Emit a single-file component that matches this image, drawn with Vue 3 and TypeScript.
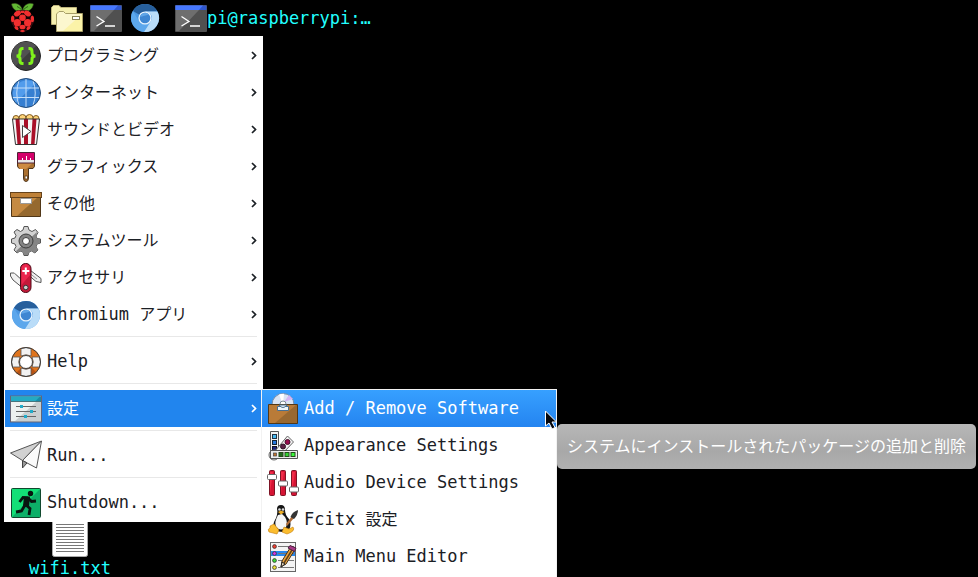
<script setup lang="ts">
import { ref } from 'vue'

interface MenuEntry {
  label: string
  icon: string
  submenu?: boolean
}

const groups: MenuEntry[][] = [
  [
    { label: 'プログラミング', icon: 'code', submenu: true },
    { label: 'インターネット', icon: 'globe', submenu: true },
    { label: 'サウンドとビデオ', icon: 'popcorn', submenu: true },
    { label: 'グラフィックス', icon: 'brush', submenu: true },
    { label: 'その他', icon: 'box', submenu: true },
    { label: 'システムツール', icon: 'gear', submenu: true },
    { label: 'アクセサリ', icon: 'knife', submenu: true },
    { label: 'Chromium アプリ', icon: 'chromium', submenu: true },
  ],
  [{ label: 'Help', icon: 'lifebuoy', submenu: true }],
  [{ label: '設定', icon: 'settings', submenu: true }],
  [{ label: 'Run...', icon: 'plane' }],
  [{ label: 'Shutdown...', icon: 'exit' }],
]

const settingsEntries: MenuEntry[] = [
  { label: 'Add / Remove Software', icon: 'package' },
  { label: 'Appearance Settings', icon: 'swatches' },
  { label: 'Audio Device Settings', icon: 'mixer' },
  { label: 'Fcitx 設定', icon: 'tux' },
  { label: 'Main Menu Editor', icon: 'editor' },
]

const launchers = [
  { name: 'ファイルマネージャ', icon: 'folder' },
  { name: 'ターミナル', icon: 'terminal' },
  { name: 'Chromium', icon: 'chromium' },
]

const activeGroup = ref('設定')
const activeEntry = ref('Add / Remove Software')

// Splits a label into runs of Latin and Japanese text, which are set at different sizes.
function runs(label: string) {
  return (label.match(/[\x20-\x7e]+|[^\x20-\x7e]+/g) ?? []).map((text) => ({
    text,
    latin: text.charCodeAt(0) < 0x7f,
  }))
}

const terminal = `
  <rect x="0" y="3" width="32" height="27" rx="1" fill="#505050"/>
  <path d="M1 8H24L4 29H1z" fill="#6e6e6e"/>
  <path d="M.5 3.500H31.500V8H.5z" fill="#2f57cf"/><path d="M.5 3.500H28L24 8H.5z" fill="#4778ff"/>
  <path d="M6.500 14.500L14 19.500L6.500 24M15 24H25" fill="none" stroke="#fff" stroke-width="1.300"/>`

const chromium = `
  <circle cx="16" cy="16" r="14" fill="#4b97e2"/>
  <path d="M16 16L3.900 9A14 14 0 0 1 28.400 9.500H16z" fill="#275f9c"/>
  <path d="M3.900 9A14 14 0 0 0 15 30L21 20L16 22A6.500 6.500 0 0 1 10 19z" fill="#5ca7ec"/>
  <path d="M16 9.500H28.400A14 14 0 0 1 15 30L21.600 19.500A6.500 6.500 0 0 0 21 11.500z" fill="#b9dcf8"/>
  <circle cx="16" cy="16" r="6.600" fill="#e7f3fd"/>
  <circle cx="16" cy="16" r="5.300" fill="#3e86d2"/>
  <path d="M11 15A5.200 5.200 0 0 1 20 12.500z" fill="#60a5e7"/>`

const icons: Record<string, string> = {
  terminal,
  chromium,
  raspberry: `
    <path d="M16.500 9C15.500 1 8 .5 5.500 2C6.500 8 11.500 10.500 16.500 9C21.500 10.500 26.500 8 27.500 2C25 .5 17.500 1 16.500 9z" fill="#62b834" stroke="#2c3516" stroke-width=".6"/>
    <path d="M11 4.500Q14 5.500 16 8.500M22 4.500Q19 5.500 17 8.500" stroke="#2d6317" fill="none"/>
    <path d="M11.500 8.500H21.500L26.500 13.500L28 19L24 26.500L16.500 30.500L9 26.500L5 19L6.500 13.500z" fill="#160406" stroke="#4d151a" stroke-width=".7"/>
    <g fill="#f22f2f"><ellipse cx="11.500" cy="11.500" rx="3.700" ry="2.500" transform="rotate(-30 11.500 11.500)"/><ellipse cx="21.500" cy="11.500" rx="3.700" ry="2.500" transform="rotate(30 21.500 11.500)"/>
    <ellipse cx="16.500" cy="10" rx="2" ry="1.300"/><circle cx="16.500" cy="15.800" r="3.300"/><circle cx="11.300" cy="20.800" r="3.700"/><circle cx="21.700" cy="20.800" r="3.700"/>
    <ellipse cx="6.700" cy="17" rx="1.700" ry="3.200"/><ellipse cx="26.300" cy="17" rx="1.700" ry="3.200"/><ellipse cx="16.500" cy="25" rx="3" ry="2.300"/>
    <ellipse cx="10.500" cy="26" rx="2.300" ry="1.500" transform="rotate(40 10.500 26)"/><ellipse cx="22.500" cy="26" rx="2.300" ry="1.500" transform="rotate(-40 22.500 26)"/><ellipse cx="16.500" cy="29" rx="2.300" ry="1"/></g>`,
  folder: `
    <path d="M.5 22.500V5.500L2.500 3.500H8L10 5.500H25.500V22.500z" fill="#f6f0b0" stroke="#bfb57c"/>
    <path d="M5.500 29.500V12L8 9.500H12.500L14.500 11.500H31.500V29.500z" fill="#fcf7cf" stroke="#a89f68"/>
    <path d="M31 12V29H12z" fill="#fbf3a8"/>
    <rect x="21.500" y="14.500" width="7" height="3" fill="#fff" stroke="#8b8558"/>`,
  code: `
    <circle cx="16" cy="16" r="14.500" fill="#3c3c3c" stroke="#222"/>
    <path d="M5.500 26A14 14 0 0 1 26 6z" fill="#515151"/>
    <path d="M13.500 8.500H12.500Q10 8.500 10 11.500V13Q10 16 6.500 16Q10 16 10 19V20.500Q10 23.500 12.500 23.500H13.500M18.500 8.500H19.500Q22 8.500 22 11.500V13Q22 16 25.500 16Q22 16 22 19V20.500Q22 23.500 19.500 23.500H18.500" fill="none" stroke="#80f21c" stroke-width="3"/>`,
  globe: `
    <circle cx="16" cy="16" r="14.500" fill="#367fd1"/><path d="M5.500 26A14.500 14.500 0 0 1 26 6z" fill="#529cec"/>
    <path d="M16 1.500V30.500M2 11H30M2 20.500H30M9 3.500Q4.500 16 9 28.500M23 3.500Q27.500 16 23 28.500" fill="none" stroke="#c5def8"/>
    <circle cx="16" cy="16" r="14.500" fill="none" stroke="#244c78"/>`,
  popcorn: `
    <g fill="#ffd477" stroke="#825d24"><circle cx="6" cy="4.500" r="3"/><circle cx="26" cy="4.500" r="3"/><circle cx="12.500" cy="4" r="3.500"/><circle cx="19.500" cy="4" r="3.500"/></g>
    <path d="M2.500 5H29.500L26.500 30.500H5.500z" fill="#f4f4f4"/>
    <path d="M5.500 5H9.500L11 30.500H7.500zM14 5H18V30.500H14zM22.500 5H26.500L24.500 30.500H21z" fill="#a90f28"/>
    <path d="M2.500 5H29.500L26.500 30.500H5.500z" fill="none" stroke="#333"/>
    <path d="M12.500 11.500L21 17.500L12.500 23.500z" fill="#fff" stroke="#444"/>`,
  brush: `
    <path d="M7.500 11V15.500L9 17.500H13.500V27Q13.500 30.500 16 30.500Q18.500 30.500 18.500 27V17.500H23L24.500 15.500V11z" fill="#ab702f" stroke="#4d351d"/>
    <path d="M8 12H23L16 18H9.500z" fill="#cd8b42"/>
    <path d="M7.500 1.500H24.500V12H7.500z" fill="#e6e6e6" stroke="#4e2135"/>
    <path d="M8 2H24V9H8z" fill="#d4006a"/>
    <path d="M12.500 9V7M16.500 9V5M20.500 9V7" stroke="#fff"/><rect x="15" y="25" width="2.500" height="3" fill="#fff" stroke="#5a3916" stroke-width=".8"/>`,
  box: `
    <path d="M1.500 8H30.500V28.500H1.500z" fill="#95692f" stroke="#503718"/><path d="M2 9H28L7 28H2z" fill="#c58a42"/>
    <rect x=".5" y="4.500" width="31" height="5" fill="#bf8138" stroke="#65431c"/><path d="M10.500 10.500H21.500V15.500H10.500z" fill="#fff" stroke="#9a9a9a"/>`,
  gear: `
    <path d="M13 5L14 1.500H18L19 5L22 6.500L25.500 4.500L28 7.500L26 11L27 13.500L30.500 14V18L27 19L26 22L28 25L25 28L21.500 26L19 27L18 30.500H14L13 27L10 26L7 28L4 25L6 21.500L5 19L1.500 18V14L5 13L6 10.500L4 7L7 4.500L10.500 6.500z" fill="#d2d2d2" stroke="#555"/>
    <path d="M27 7L26 11L27 13.500L30 14V18L27 19L26 22L28 25L25 28L21.500 26L19 27L18 30H14L13 27L10 26L7 28L6 26z" fill="#858585"/>
    <circle cx="16" cy="16" r="7" fill="#858585" stroke="#3d3d3d"/><circle cx="16" cy="16" r="3.500" fill="#fff" stroke="#3f3f3f"/>`,
  knife: `
    <path d="M.5 11V14L3 18L14 27L18 23L4 11zM16 5L31 16.500V20.500L26 19.500L15 10z" fill="#f1f1f1" stroke="#555"/>
    <path d="M4 11L12 18M18 10L27 17" stroke="#999"/><rect x="10.500" y="1.500" width="10.500" height="29" rx="5" fill="#c51839" stroke="#4f0a18"/>
    <path d="M11.500 23V7Q11 3 16 2Q20 3 20 8V13z" fill="#eb254d"/><path d="M15.800 5.500V12.500M12.300 9H19.300" stroke="#fff" stroke-width="2"/>
    <circle cx="15.800" cy="25.500" r="2.300" fill="#ccc" stroke="#333"/>`,
  lifebuoy: `
    <circle cx="16" cy="16" r="10.700" fill="none" stroke="#df741d" stroke-width="8"/>
    <path d="M26 26L21 21L11 22L6 27Q16 34 26 26" fill="#b95414"/>
    <path d="M11 2.500Q16 .5 21 2.500V10Q16 7.500 11 10zM11 29.500Q16 31.500 21 29.500V22Q16 24.500 11 22zM2.500 11Q.5 16 2.500 21H10Q7.500 16 10 11zM29.500 11Q31.500 16 29.500 21H22Q24.500 16 22 11z" fill="#f2f2f2" stroke="#555" stroke-width=".8"/>
    <circle cx="16" cy="16" r="14.500" fill="none" stroke="#3e3e3e"/><circle cx="16" cy="16" r="6.500" fill="#fff" stroke="#3e3e3e"/>`,
  settings: `
    <rect x=".5" y="3" width="31" height="26" fill="#c9cfd0" stroke="#667"/><path d="M1 9H26L5 28H1z" fill="#edf1f0"/>
    <path d="M1 3.500H31V8.500H1z" fill="#168ba9"/><path d="M1 3.500H30L25 8.500H1z" fill="#24aac3"/><path d="M1 8.500H31" stroke="#45757d"/>
    <path d="M6 13.500H26M6 18.500H26M6 23.500H26" stroke="#666"/><g fill="#20abc9"><rect x="10" y="12" width="3" height="3"/><rect x="20" y="17" width="3" height="3"/><rect x="14" y="22" width="3" height="3"/></g>`,
  plane: `
    <path d="M.5 13L31.500 1L12.500 20.500z" fill="#d1d1d1" stroke="#555" stroke-linejoin="round"/>
    <path d="M31.500 1L12.500 20.500L26.500 28z" fill="#fafafa" stroke="#555" stroke-linejoin="round"/>
    <path d="M12.500 20.500V28L17 23z" fill="#999" stroke="#444" stroke-linejoin="round"/>`,
  exit: `
    <rect x="1.500" y="1.500" width="29" height="29" rx="1" fill="#0daf68" stroke="#11482e"/><path d="M2 2H30L2 30z" fill="#13df77"/>
    <circle cx="20.500" cy="6.500" r="2.700" fill="#081510"/>
    <path d="M18 11L13 10.500L9.500 15M18 11L15 18L11.500 24L6 25M16 18L20 21.500L19 28M18 11L21.500 14.500L26 14" fill="none" stroke="#081510" stroke-width="2.800"/><path d="M14 9.500L20 9.500L19 19L13 19z" fill="#081510"/>`,
  package: `
    <circle cx="16" cy="11.500" r="11" fill="#d9e4f4" stroke="#728ba9"/><path d="M16 11.500L12 1.500A11 11 0 0 1 17 .8z" fill="#fff"/><path d="M17 9L22 2L26 6z" fill="#d3b4f4"/>
    <circle cx="16" cy="11" r="3" fill="#fff" stroke="#7c8a98"/>
    <path d="M1.500 11.500H30.500V30.500H1.500z" fill="#986830" stroke="#523817"/><path d="M2 12H29L8 30H2z" fill="#b97b38"/>
    <path d="M10.500 13.500H21.500V17.500H10.500z" fill="#eef6fc" stroke="#496f90"/><path d="M12 12Q16 17 20 12z" fill="#e9f4ff" stroke="#496f90"/>`,
  swatches: `
    <path d="M3.500 1.500H11.500V24H3.500z" fill="#f3f3f3" stroke="#555"/><rect x="5.500" y="4.500" width="4" height="4" fill="#47b8ef" stroke="#234"/><rect x="5.500" y="10.500" width="4" height="4" fill="#2576db" stroke="#123"/><rect x="5.500" y="16.500" width="4" height="4" fill="#1b257e" stroke="#112"/>
    <path d="M8 21L20.500 6L26.500 12L15 24z" fill="#f2f2f2" stroke="#666"/><circle cx="20.500" cy="12" r="2.500" fill="#990a4d" stroke="#401129"/><circle cx="16" cy="16.500" r="2.500" fill="#5b2045" stroke="#321225"/>
    <circle cx="7" cy="25" r="5" fill="#eee" stroke="#666"/>
    <path d="M3.500 20.500H30.500V28.500H3.500z" fill="#eee" stroke="#555"/><g stroke="#254b1c"><rect x="12" y="22.500" width="4" height="4" fill="#226b1c"/><rect x="18" y="22.500" width="4" height="4" fill="#32d632"/><rect x="24" y="22.500" width="4" height="4" fill="#39f939"/></g><rect x="6.500" y="23" width="3" height="3" fill="#bf7530" stroke="#444" stroke-width=".7"/>`,
  mixer: `
    <g fill="#d51434" stroke="#7d1425"><rect x="2.500" y="3.500" width="5" height="25" rx="1"/><rect x="13.500" y="3.500" width="5" height="25" rx="1"/><rect x="24.500" y="3.500" width="5" height="25" rx="1"/></g>
    <path d="M3 26V5H6zM14 26V5H17zM25 26V5H28z" fill="#f02b48"/>
    <g fill="#fff" stroke="#666"><rect x=".5" y="7.500" width="9" height="5" rx="1"/><rect x="11.500" y="14" width="9" height="5" rx="1"/><rect x="22.500" y="20" width="9" height="5" rx="1"/></g>`,
  tux: `
    <path d="M9 14Q11 9 10 5Q10 1 14 1Q18 1 18 6Q18 11 22 15Q25 20 22 26Q16 30 8 26Q4 22 9 14z" fill="#151515"/>
    <path d="M11 11L15 10L18 13Q21 18 19 23Q14 28 9 23Q7 18 11 11z" fill="#f5f5f5"/>
    <circle cx="12.500" cy="5.500" r="1.300" fill="#ddd"/><circle cx="16" cy="5.500" r="1.300" fill="#ddd"/><path d="M11 8L14 6.500L17.500 8L14 10.500z" fill="#edae26"/>
    <path d="M3 22L7 20L12 26L10 30L2 28Q0 25 3 24zM17 23L22 25L26 23Q29 27 20 30L15 28z" fill="#fbbd30" stroke="#c27c0b" stroke-width=".6"/>
    <path d="M19 20L25 12L27 14L20 22z" fill="#b06b35"/><path d="M23.500 13Q25 8 31 6Q31 11 27 15z" fill="#343434"/>`,
  editor: `
    <rect x="3.500" y="1.500" width="25" height="29" fill="#f4f4f4" stroke="#666"/><rect x="4" y="10" width="24" height="5" fill="#2688ee"/>
    <path d="M11 5.500H27M11 12.500H27M11 19.500H27M11 26.500H27" stroke="#777"/><g stroke="#333" stroke-width=".8"><circle cx="7.500" cy="5.500" r="1.900" fill="#f13c2c"/><circle cx="7.500" cy="12.500" r="1.900" fill="#d538e5"/><circle cx="7.500" cy="19.500" r="1.900" fill="#38d932"/><circle cx="7.500" cy="26.500" r="1.900" fill="#ecdf34"/></g>
    <path d="M14 26L15 20L23 7L27 10L19 23z" fill="#eea53c" stroke="#433018"/><path d="M17 22L25 9" stroke="#5c401d" stroke-width="1.500"/><path d="M14 26L15 21L18 23z" fill="#e9d9bd" stroke="#222"/><path d="M21 7L23 4.500L29 7L27.500 10.500z" fill="#a73886" stroke="#4e203f"/>`,
}
</script>

<template>
  <div class="desktop">
    <header class="panel">
      <button class="launcher" aria-label="メニュー">
        <svg class="icon" viewBox="0 0 32 32" v-html="icons.raspberry"></svg>
      </button>
      <nav class="launchers">
        <button v-for="item in launchers" :key="item.icon" class="launcher" :aria-label="item.name">
          <svg class="icon" viewBox="0 0 32 32" v-html="icons[item.icon]"></svg>
        </button>
      </nav>
      <button class="task">
        <svg class="icon" viewBox="0 0 32 32" v-html="icons.terminal"></svg>
        <span class="latin">pi@raspberrypi:…</span>
      </button>
    </header>

    <main class="workspace">
      <button class="file">
        <svg class="icon-file" viewBox="0 0 36 48">
          <rect x=".5" y=".5" width="35" height="47" rx="2" fill="#fff" stroke="#aaa" />
          <path
            d="M4 6.500H32M4 9.500H32M4 12.500H32M4 15.500H32M4 18.500H32M4 21.500H32M4 24.500H32M4 27.500H32M4 30.500H32M4 33.500H32M4 36.500H32M4 39.500H32M4 42.500H32"
            stroke="#777"
          />
        </svg>
        <span class="latin">wifi.txt</span>
      </button>
    </main>

    <div class="menu" role="menu">
      <div v-for="(group, index) in groups" :key="index" class="group" role="group">
        <button
          v-for="entry in group"
          :key="entry.label"
          class="entry"
          :class="{ active: entry.label === activeGroup }"
          role="menuitem"
          @click="activeGroup = entry.label"
        >
          <svg class="icon" viewBox="0 0 32 32" v-html="icons[entry.icon]"></svg>
          <span class="label">
            <span v-for="(run, i) in runs(entry.label)" :key="i" :class="{ latin: run.latin }">{{ run.text }}</span>
          </span>
          <svg v-if="entry.submenu" class="chevron" viewBox="0 0 6 10">
            <path d="M1 1L4.500 4.500L1 8" fill="none" stroke="currentColor" stroke-width="1.700" />
          </svg>
        </button>
      </div>
    </div>

    <div class="submenu" role="menu">
      <button
        v-for="entry in settingsEntries"
        :key="entry.label"
        class="entry"
        :class="{ active: entry.label === activeEntry }"
        role="menuitem"
        @mouseenter="activeEntry = entry.label"
      >
        <svg class="icon" viewBox="0 0 32 32" v-html="icons[entry.icon]"></svg>
        <span class="label">
          <span v-for="(run, i) in runs(entry.label)" :key="i" :class="{ latin: run.latin }">{{ run.text }}</span>
        </span>
      </button>
    </div>

    <div class="tooltip" role="tooltip">システムにインストールされたパッケージの追加と削除</div>
    <svg class="pointer" viewBox="0 0 12 20">
      <path d="M.5 1V16L4 13L7 19L10 17.500L7 12H11.500z" fill="#05070d" stroke="#fff" />
    </svg>
  </div>
</template>

<style>
body {
  margin: 0;
  background: #000;
  overflow: hidden;
}
</style>

<style scoped>
.desktop {
  position: relative;
  display: flex;
  flex-direction: column;
  height: 100vh;
  overflow: hidden;
  background: #000;
  font-family: 'DejaVu Sans Mono', 'Noto Sans CJK JP', monospace;
  font-size: 16px;
  line-height: 24px;
}

.latin {
  font-size: 17px;
  white-space: pre;
}

button {
  margin: 0;
  padding: 0;
  border: 0;
  background: none;
  color: inherit;
  font: inherit;
  text-align: left;
}

svg {
  display: block;
  flex: none;
}

.icon {
  width: 32px;
  height: 32px;
}

.panel {
  display: flex;
  align-items: center;
  gap: 13px;
  height: 36px;
  padding-left: 6px;
  color: #2ff;
}

.launchers {
  display: flex;
  gap: 7px;
}

.task {
  display: flex;
  align-items: center;
  padding-left: 1px;
}

.workspace {
  flex: 1;
  display: flex;
  align-items: flex-end;
  padding-left: 29px;
}

.file {
  display: flex;
  flex-direction: column;
  align-items: center;
  gap: 2px;
  color: #2ff;
  line-height: 18px;
}

.icon-file {
  width: 36px;
  height: 48px;
}

.menu {
  position: absolute;
  top: 36px;
  left: 4px;
  width: 257px;
  padding: 1px;
  background: #fff;
  color: #1b2025;
}

.group + .group::before {
  content: '';
  display: block;
  height: 1px;
  margin: 3px 5px 6px;
  background: #e8e8e8;
}

.entry {
  display: flex;
  align-items: center;
  width: 100%;
  height: 37px;
  padding: 0 5px;
  gap: 5px;
}

.label {
  flex: 1;
  white-space: nowrap;
}

.chevron {
  width: 6px;
  height: 10px;
}

.entry.active {
  background: #2185ee;
  color: #fff;
}

.submenu {
  position: absolute;
  top: 389px;
  bottom: 0;
  left: 261px;
  width: 294px;
  border: 1px solid #f2f2f2;
  border-bottom: 0;
  background: #fff;
  color: #1b2025;
}

.submenu .entry.active {
  background: linear-gradient(#37a0ff, #2484f0);
}

.tooltip {
  position: absolute;
  top: 424px;
  left: 557px;
  padding: 11px 10px 10px;
  border-radius: 5px;
  background: linear-gradient(#b7b7b7, #a8a8a8 60%, #b0b0b0);
  color: #fff;
  white-space: nowrap;
}

.pointer {
  position: absolute;
  top: 410px;
  left: 545px;
  width: 12px;
  height: 20px;
}
</style>
